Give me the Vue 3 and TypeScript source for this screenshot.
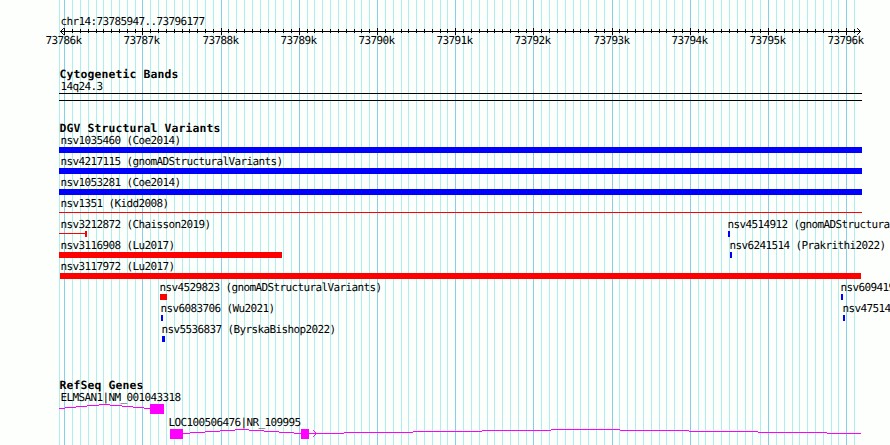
<script setup lang="ts">
interface Label { x: number; y: number; text: string }
interface Box { x: number; y: number; w: number; h: number; color: string }

const BLUE = '#0000ff'
const RED = '#ff0000'
const ORIGIN = 64.25
const STEP = 7.82

const grid = Array.from({ length: 102 }, (_, i) => ({
  x: Math.round(ORIGIN + i * STEP),
  major: i % 10 === 0,
}))
const scale: Label[] = Array.from({ length: 11 }, (_, i) => ({
  x: Math.round(ORIGIN + i * STEP * 10) - 18.5,
  y: 44,
  text: `${73786 + i}k`,
}))

const headings: Label[] = [
  { x: 59.5, y: 78, text: 'Cytogenetic Bands' },
  { x: 59.5, y: 132, text: 'DGV Structural Variants' },
  { x: 59.5, y: 389, text: 'RefSeq Genes' },
]

const labels: Label[] = [
  { x: 60.5, y: 25, text: 'chr14:73785947..73796177' },
  { x: 60.5, y: 90, text: '14q24.3' },
  { x: 60.5, y: 144, text: 'nsv1035460 (Coe2014)' },
  { x: 60.5, y: 165, text: 'nsv4217115 (gnomADStructuralVariants)' },
  { x: 60.5, y: 186, text: 'nsv1053281 (Coe2014)' },
  { x: 60.5, y: 207, text: 'nsv1351 (Kidd2008)' },
  { x: 60.5, y: 228, text: 'nsv3212872 (Chaisson2019)' },
  { x: 60.5, y: 249, text: 'nsv3116908 (Lu2017)' },
  { x: 60.5, y: 270, text: 'nsv3117972 (Lu2017)' },
  { x: 159.5, y: 291, text: 'nsv4529823 (gnomADStructuralVariants)' },
  { x: 160.5, y: 312, text: 'nsv6083706 (Wu2021)' },
  { x: 161.5, y: 333, text: 'nsv5536837 (ByrskaBishop2022)' },
  { x: 727.5, y: 228, text: 'nsv4514912 (gnomADStructura' },
  { x: 729.5, y: 249, text: 'nsv6241514 (Prakrithi2022)' },
  { x: 840.5, y: 291, text: 'nsv609419' },
  { x: 842.5, y: 312, text: 'nsv47514' },
  { x: 60.5, y: 401, text: 'ELMSAN1|NM_001043318' },
  { x: 168.5, y: 426, text: 'LOC100506476|NR_109995' },
]

const boxes: Box[] = [
  { x: 59, y: 93, w: 803, h: 1, color: '#000' },
  { x: 59, y: 100, w: 803, h: 1, color: '#000' },
  { x: 59, y: 147, w: 803, h: 6, color: BLUE },
  { x: 59, y: 168, w: 803, h: 6, color: BLUE },
  { x: 59, y: 189, w: 803, h: 6, color: BLUE },
  { x: 59, y: 212, w: 803, h: 1, color: RED },
  { x: 59, y: 233, w: 26, h: 1, color: RED },
  { x: 85, y: 231, w: 2, h: 6, color: RED },
  { x: 59, y: 252, w: 223, h: 6, color: RED },
  { x: 60, y: 273, w: 801, h: 6, color: RED },
  { x: 160, y: 294, w: 7, h: 6, color: RED },
  { x: 161, y: 315, w: 2, h: 6, color: BLUE },
  { x: 162, y: 336, w: 3, h: 6, color: BLUE },
  { x: 728, y: 231, w: 2, h: 6, color: BLUE },
  { x: 730, y: 252, w: 2, h: 6, color: BLUE },
  { x: 841, y: 294, w: 2, h: 6, color: BLUE },
  { x: 843, y: 315, w: 2, h: 6, color: BLUE },
]

const exons = [
  { x: 150, y: 404, w: 14 },
  { x: 170, y: 429, w: 13 },
  { x: 301, y: 429, w: 8 },
]

// An intron is a shallow hat, four pixels high, drawn in whole-pixel runs.
function intron(x0: number, x1: number, y: number) {
  const run = (x1 - x0) / 8
  return Array.from({ length: 9 }, (_, i) => {
    const from = i === 0 ? x0 : Math.round(x0 + (i - 0.5) * run)
    const to = i === 8 ? x1 : Math.round(x0 + (i + 0.5) * run)
    return { x: from, y: y - 4 + Math.abs(4 - i), w: to - from }
  })
}
const introns = [
  ...intron(59, 150, 408),
  ...intron(183, 301, 433),
  ...intron(309, 861, 433),
]
</script>

<template>
  <main class="browser">
    <svg class="tracks" width="890" height="445" viewBox="0 0 890 445">
      <g class="crisp">
        <rect class="minor" x="59" y="0" width="1" height="445" />
        <rect
          v-for="g in grid.filter(l => l.x < 860)"
          :key="g.x"
          :class="g.major ? 'major' : 'minor'"
          :x="g.x" y="0" width="1" height="445"
        />
        <rect x="60" y="31" width="801" height="1" />
        <rect
          v-for="g in grid.filter(l => l.x < 860)"
          :key="g.x"
          :x="g.x" :y="g.major ? 28 : 29" width="1" :height="g.major ? 7 : 4"
        />
        <rect v-for="(b, i) in boxes" :key="i" :x="b.x" :y="b.y" :width="b.w" :height="b.h" :fill="b.color" />
        <rect v-for="(s, i) in introns" :key="i" class="gene" :x="s.x" :y="s.y" :width="s.w" height="1" />
        <rect v-for="e in exons" :key="e.x" class="gene" :x="e.x" :y="e.y" :width="e.w" height="10" />
      </g>
      <path class="arrow" d="M63.5 28.5l-3 3 3 3M857.5 28.5l3 3-3 3" />
      <path class="strand" d="M313.5 430.5l3 3-3 3" />
      <text v-for="s in scale" :key="s.text" class="label" :x="s.x" :y="s.y">{{ s.text }}</text>
      <text v-for="l in labels" :key="l.text" class="label" :x="l.x" :y="l.y">{{ l.text }}</text>
      <text v-for="h in headings" :key="h.text" class="heading" :x="h.x" :y="h.y">{{ h.text }}</text>
    </svg>
  </main>
</template>

<style>
body { background: #fdfffc; }
</style>

<style scoped>
.browser { width: 890px; height: 445px; overflow: hidden; background: #fdfffc; }
.tracks { display: block; }
.crisp { shape-rendering: crispEdges; }
.minor { fill: #afeeee; }
.major { fill: #87ceeb; }
.gene { fill: #ff00ff; }
.arrow { fill: none; stroke: #000; stroke-linecap: square; }
.strand { fill: none; stroke: #ff00ff; stroke-linecap: square; }
.label, .heading {
  font-family: "DejaVu Sans Mono", monospace;
  text-rendering: geometricPrecision;
  white-space: pre;
  fill: #000;
}
.label { font-size: 11px; letter-spacing: -0.622px; }
.heading { font-size: 11.4px; font-weight: bold; letter-spacing: 0.137px; }
</style>
